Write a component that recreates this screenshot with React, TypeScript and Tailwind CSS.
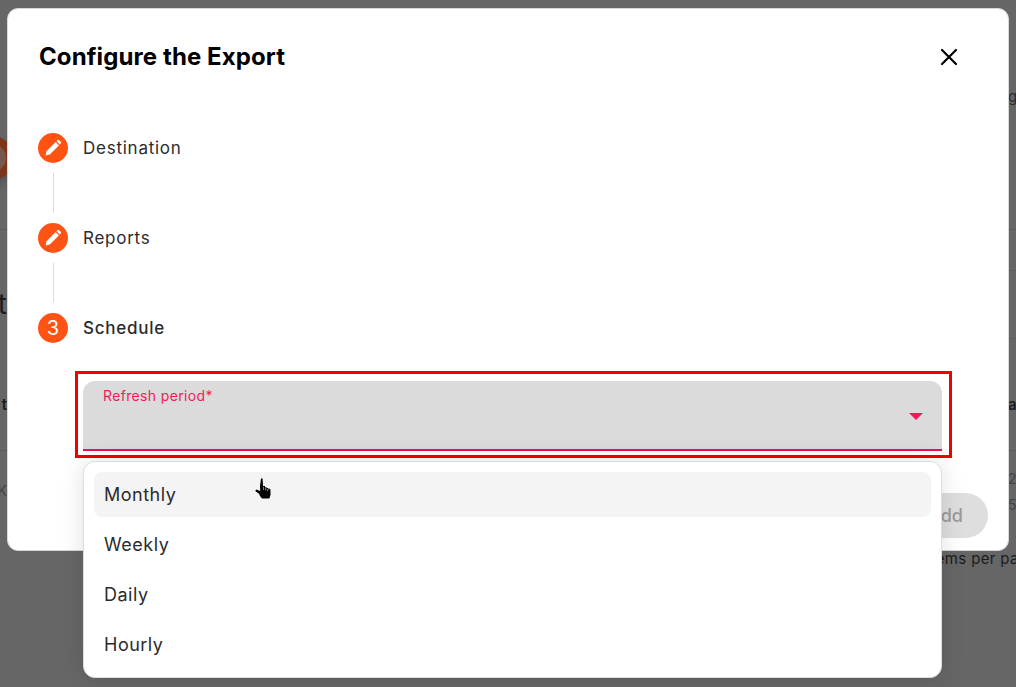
import React from "react";

function Pencil() {
  return (
    <svg width="20" height="20" viewBox="0 0 20 20" fill="#fff">
      <path d="M2.6 17.4l.9-4.2L12.6 4.1l3.3 3.3-9.1 9.1-4.2.9z" />
      <path d="M13.5 3.2l.9-.9a1.3 1.3 0 0 1 1.8 0l1.5 1.5a1.3 1.3 0 0 1 0 1.8l-.9.9-3.3-3.3z" />
    </svg>
  );
}

function Step({ icon, label, active }: { icon: React.ReactNode; label: string; active?: boolean }) {
  return (
    <div className="flex items-center h-[30px]">
      <div className="w-[30px] h-[30px] rounded-full bg-[#ff5314] flex items-center justify-center text-white text-[20px] shrink-0">{icon}</div>
      <span className={`ml-[15px] pt-[2px] text-[17px] tracking-[0.75px] text-[#2b2b2b] ${active ? "font-medium" : ""}`}>{label}</span>
    </div>
  );
}

function Connector() {
  return <div className="ml-[15px] w-px h-[40px] my-[10px] bg-[#dcdcdc]" />;
}

function Option({ label, active }: { label: string; active?: boolean }) {
  return (
    <div className={`shrink-0 rounded-[8px] px-[10px] flex items-center ${active ? "h-[45px] bg-[#f4f4f4]" : "h-[50px]"}`}>{label}</div>
  );
}

function Background() {
  return (
    <div className="absolute inset-0 flex flex-col text-[#2c2c2c]">
      <div className="h-[88px] shrink-0" />
      <div className="h-[18px] shrink-0 flex justify-end items-center text-[15px]">
        <div className="w-[8px] whitespace-nowrap">gi</div>
      </div>
      <div className="h-[30px] shrink-0" />
      <div className="h-[44px] shrink-0 flex">
        <div className="w-[44px] h-[44px] -ml-[30px] rounded-full bg-[#7f3518] flex items-center justify-center shadow-[0_6px_10px_rgba(0,0,0,0.2)]">
          <div className="w-[28px] h-[28px] rounded-full bg-[#75584c]" />
        </div>
      </div>
      <div className="h-[50px] shrink-0 border-b border-[#5a5a5a]" />
      <div className="h-[41px] shrink-0 flex justify-end">
        <div className="w-[8px] border-b border-[#5c5c5c]" />
      </div>
      <div className="h-[22px] shrink-0" />
      <div className="h-[21px] shrink-0 flex items-center">
        <div className="w-[7px] flex justify-end whitespace-nowrap text-[28px] text-[#1c1c1c]">t</div>
      </div>
      <div className="h-[25px] shrink-0 flex justify-end">
        <div className="w-[8px] border-b border-[#5c5c5c]" />
      </div>
      <div className="h-[56px] shrink-0" />
      <div className="h-[20px] shrink-0 flex items-center justify-between text-[15px] font-semibold text-[#1c1c1c]">
        <div className="w-[7px] flex justify-end whitespace-nowrap">t</div>
        <div className="w-[8px] whitespace-nowrap">at</div>
      </div>
      <div className="h-[36px] shrink-0 border-b border-[#5a5a5a]" />
      <div className="h-[18px] shrink-0" />
      <div className="h-[46px] shrink-0 flex justify-between text-[14px] text-[#444444]">
        <div className="w-[7px] flex justify-end items-end whitespace-nowrap leading-[20px] pb-[14px]">K</div>
        <div className="w-[8px] flex flex-col gap-[6px] leading-[20px]">
          <span>2</span>
          <span>5</span>
        </div>
      </div>
      <div className="h-[34px] shrink-0" />
      <div className="h-[20px] shrink-0 pl-[926px] flex items-center whitespace-nowrap text-[15px] tracking-[0.35px] text-[#1c1c1c]">
        Items per page
      </div>
    </div>
  );
}

function HandCursor() {
  return (
    <svg width="18" height="22" viewBox="0 0 18 22" className="absolute left-[255px] top-[478px]">
      <path
        d="M6 0.5h1.6l.4 7.5h2v1.2h1.6v.8h1.6v.8h1.6l.7 1v5.2l-1.2 3.5H7l-2-2.5-1-2.2-3.5-2.6v-1l1-.7 3 1.2.7.4-.2-5L6 0.5z"
        fill="#000"
      />
      <path d="M8.6 9v3M10.8 10v2.5M12.8 11v2" stroke="#cfcfcf" strokeWidth="0.7" fill="none" />
    </svg>
  );
}

export default function App() {
  return (
    <div className="relative w-[1016px] h-[687px] overflow-hidden bg-[#666666]" style={{ fontFamily: "'Inter','Liberation Sans',sans-serif" }}>
      <Background />

      <div className="absolute left-[7px] top-[8px] w-[1002px] h-[543px] rounded-[11px] border border-[#d8d8d8] bg-white pl-[30px] pr-[20px] pt-[32px] pb-[12px] flex flex-col">
        <div className="flex items-center justify-between h-[32px]">
          <h1 className="ml-px text-[24px] font-bold text-black tracking-[0.1px]">Configure the Export</h1>
          <svg width="24" height="24" viewBox="0 0 24 24" className="mr-[27px]" fill="none" stroke="#000" strokeWidth="2.2" strokeLinecap="round">
            <path d="M5 5L19 19M19 5L5 19" />
          </svg>
        </div>
        <div className="mt-[60px] flex flex-col">
          <Step icon={<Pencil />} label="Destination" />
          <Connector />
          <Step icon={<Pencil />} label="Reports" />
          <Connector />
          <Step icon="3" label="Schedule" active />
        </div>
        <div className="mt-[28px] ml-[37px] mr-[36px] h-[87px] border-[3px] border-[#f00000] pl-[5px] pr-[7px] pt-[7px] pb-[4px]">
          <div className="relative h-full rounded-t-[12px] bg-[#dbdbdb] border-b-2 border-[#ef0f4d] px-[20px] pt-[6px]">
            <div className="text-[14px] leading-[18px] tracking-[0.35px] text-[#f5195a]">Refresh period*</div>
            <svg width="14" height="7" viewBox="0 0 14 7" className="absolute right-[19px] top-[32px]" fill="#f5195a">
              <path d="M0 0H14L7 7Z" />
            </svg>
          </div>
        </div>
        <div className="mt-auto flex justify-end">
          <div className="w-[120px] h-[45px] rounded-full bg-[#dedede] flex items-center justify-end pr-[25px] text-[18px] font-medium text-[#9a9a9a]">Add</div>
        </div>
      </div>

      <div className="absolute left-[83px] top-[461px] w-[859px] h-[217px] rounded-[12px] border border-[#dddddd] bg-white shadow-[0_0_24px_rgba(0,0,0,0.12)] p-[10px] text-[18px] tracking-[0.5px] text-[#2b2b2b] flex flex-col">
        <Option label="Monthly" active />
        <div className="h-[2px] shrink-0" />
        <Option label="Weekly" />
        <Option label="Daily" />
        <Option label="Hourly" />
      </div>

      <HandCursor />
    </div>
  );
}
